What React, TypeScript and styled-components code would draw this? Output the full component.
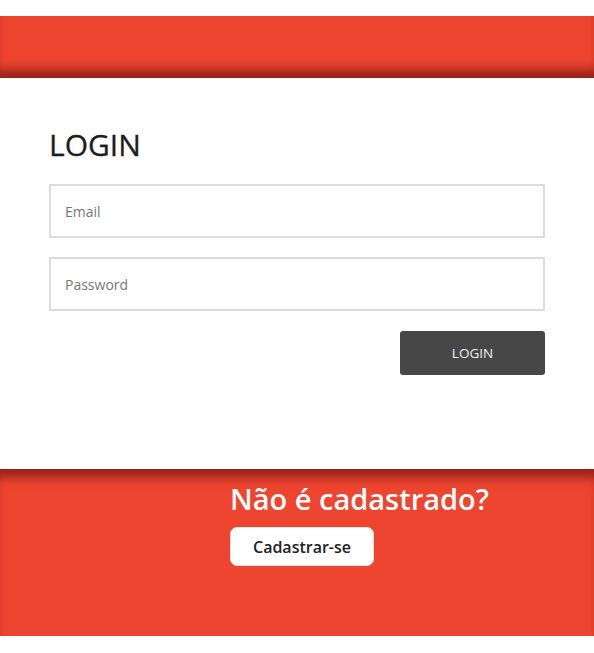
import React from "react";
import styled, { createGlobalStyle } from "styled-components";

const GlobalStyle = createGlobalStyle`
  html, body {
    margin: 0;
    padding: 0;
    background: #ffffff;
    font-family: "Open Sans", "Noto Sans", sans-serif;
  }
  * { box-sizing: border-box; }
`;

const Page = styled.div`
  padding-top: 16px;
  padding-bottom: 17px;
  background: #ffffff;
`;

const TopBar = styled.header`
  height: 62px;
  background: #ee4530;
  box-shadow: inset 0 -14px 12px -6px rgba(70, 0, 0, 0.55);
`;

const LoginSection = styled.main`
  height: 391px;
  padding: 46px 49px 0 49px;
`;

const Title = styled.h1`
  margin: 0;
  font-size: 30px;
  line-height: 42px;
  font-weight: 500;
  color: #1c1c1c;
  -webkit-text-stroke: 0.3px #1c1c1c;
`;

const Form = styled.form`
  display: flex;
  flex-direction: column;
  margin-top: 18px;
  gap: 19px;
`;

const Input = styled.input`
  width: 100%;
  height: 54px;
  border: 2px solid #dcdcdc;
  padding: 0 14px;
  font-family: inherit;
  font-size: 14px;
  color: #333;
  outline: none;
  &::placeholder {
    color: #777777;
  }
`;

const ButtonRow = styled.div`
  display: flex;
  justify-content: flex-end;
  margin-top: 1px;
`;

const LoginButton = styled.button`
  width: 145px;
  height: 44px;
  background: #474747;
  border: none;
  border-radius: 3px;
  color: #f0f0f0;
  font-family: inherit;
  font-size: 13.5px;
  cursor: pointer;
`;

const SignupBand = styled.section`
  height: 167px;
  background: #ee4530;
  box-shadow: inset 0 14px 12px -6px rgba(70, 0, 0, 0.55);
  padding: 12px 0 0 230px;
`;

const SignupTitle = styled.h2`
  margin: 0;
  font-size: 29px;
  line-height: 36px;
  font-weight: 600;
  color: #ffffff;
`;

const SignupButton = styled.button`
  margin-top: 10px;
  width: 144px;
  height: 39px;
  background: #ffffff;
  border: 1px solid #e6e6e6;
  border-radius: 7px;
  color: #222222;
  font-family: inherit;
  font-size: 16px;
  font-weight: 600;
  cursor: pointer;
`;

export default function App() {
  return (
    <>
      <GlobalStyle />
      <Page>
        <TopBar />
        <LoginSection>
          <Title>LOGIN</Title>
          <Form onSubmit={(e) => e.preventDefault()}>
            <Input type="email" placeholder="Email" />
            <Input type="password" placeholder="Password" />
            <ButtonRow>
              <LoginButton type="submit">LOGIN</LoginButton>
            </ButtonRow>
          </Form>
        </LoginSection>
        <SignupBand>
          <SignupTitle>Não é cadastrado?</SignupTitle>
          <SignupButton type="button">Cadastrar-se</SignupButton>
        </SignupBand>
      </Page>
    </>
  );
}
